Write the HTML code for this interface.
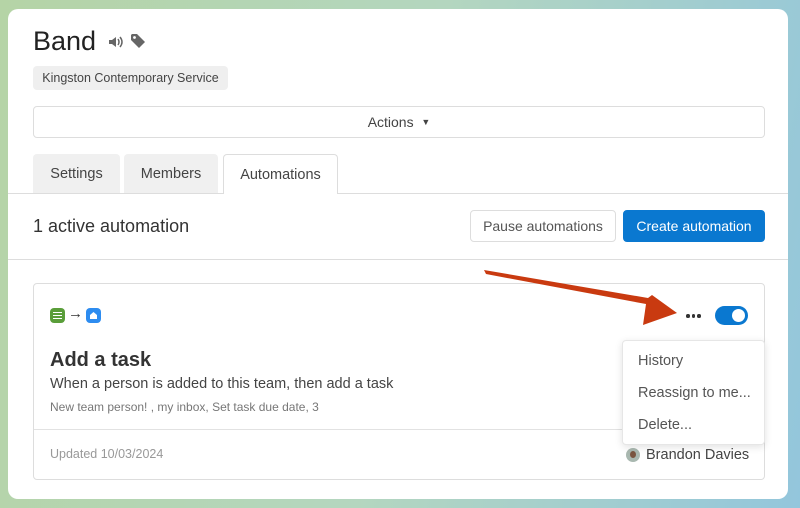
<!DOCTYPE html>
<html><head><style>
*{box-sizing:border-box;margin:0;padding:0}
body{width:800px;height:508px;overflow:hidden;background:linear-gradient(100deg,#b5d4a6 0%,#b4d6bf 50%,#93c6dc 100%);font-family:"Liberation Sans",sans-serif;color:#333;position:relative}
.panel{position:absolute;left:8px;top:9px;width:780px;height:490px;background:#fff;border-radius:10px;overflow:hidden}
.a{position:absolute}
.btn{position:absolute;border:1px solid #ddd;border-radius:4px;font-size:14px;display:flex;align-items:center;justify-content:center}
.dot{position:absolute;top:0;width:3.5px;height:3.5px;border-radius:50%;background:#333}
</style></head><body>
<div class="panel">
<div class="a" style="left:25px;top:17px;font-size:27px;color:#222">Band</div>
<svg class="a" style="left:100px;top:26px" width="16" height="14" viewBox="0 0 16 14"><path d="M1 5h3l4-3v10l-4-3H1z" fill="#666"/><path d="M10 4q2 3 0 6M12 2q4 5 0 10" stroke="#666" stroke-width="1.5" fill="none"/></svg>
<svg class="a" style="left:122px;top:24px" width="16" height="16" viewBox="0 0 16 16"><path d="M1 2v5l8 8 6-6-8-8H2z" fill="#666"/><circle cx="4.5" cy="4.5" r="1.4" fill="#fff"/></svg>
<div class="a" style="left:25px;top:57px;height:24px;width:195px;background:#efefef;border-radius:4px;font-size:12.5px;color:#444;display:flex;align-items:center;justify-content:center">Kingston Contemporary Service</div>
<div class="btn" style="left:25px;top:97px;width:732px;height:32px;color:#444">Actions&nbsp;&nbsp;<span style="font-size:9px">▼</span></div>
<div class="a" style="left:25px;top:145px;width:87px;height:40px;background:#f0f0f0;border-radius:4px 4px 0 0;font-size:14.5px;color:#444;display:flex;align-items:center;justify-content:center">Settings</div>
<div class="a" style="left:116px;top:145px;width:94px;height:40px;background:#f0f0f0;border-radius:4px 4px 0 0;font-size:14.5px;color:#444;display:flex;align-items:center;justify-content:center">Members</div>
<div class="a" style="left:215px;top:145px;width:115px;height:40px;background:#fff;border:1px solid #ddd;border-bottom:none;border-radius:4px 4px 0 0;font-size:14.5px;color:#444;display:flex;align-items:center;justify-content:center;z-index:2">Automations</div>
<div class="a" style="left:0;top:184px;width:780px;border-top:1px solid #ddd"></div>
<div class="a" style="left:25px;top:207px;font-size:18px;color:#333">1 active automation</div>
<div class="btn" style="left:462px;top:201px;width:146px;height:32px;color:#555">Pause automations</div>
<div class="btn" style="left:615px;top:201px;width:142px;height:32px;background:#0a78d0;border-color:#0a78d0;color:#fff">Create automation</div>
<div class="a" style="left:0;top:250px;width:780px;border-top:1px solid #ddd"></div>
<div class="a" style="left:25px;top:274px;width:732px;height:197px;border:1px solid #ddd;border-radius:4px">
<div class="a" style="left:16px;top:24px;width:15px;height:15px;background:#5a9e3a;border-radius:4px"><div style="margin:4px 3px;height:7px;border-top:1.5px solid #fff;border-bottom:1.5px solid #fff;position:relative"><div style="position:absolute;top:1.5px;left:0;right:0;border-top:1.5px solid #fff"></div></div></div>
<div class="a" style="left:34px;top:21px;font-size:15px;color:#333">→</div>
<div class="a" style="left:52px;top:24px;width:15px;height:15px;background:#2d8cf0;border-radius:4px"><svg width="15" height="15"><path d="M4 11V7l3.5-3L11 7v4z" fill="#fff"/></svg></div>
<div class="a" style="left:16px;top:65px;font-size:20px;font-weight:bold;color:#333">Add a task</div>
<div class="a" style="left:16px;top:92px;font-size:14.5px;color:#444">When a person is added to this team, then add a task</div>
<div class="a" style="left:16px;top:116px;font-size:12px;color:#777">New team person! , my inbox, Set task due date, 3</div>
<div class="a" style="left:0;top:145px;width:730px;border-top:1px solid #e2e2e2"></div>
<div class="a" style="left:16px;top:163px;font-size:12.5px;color:#999">Updated 10/03/2024</div>
<div class="a" style="left:592px;top:164px;width:14px;height:14px;border-radius:50%;background:#a9b8b0"><div style="margin:3px 4px;width:6px;height:7px;border-radius:50%;background:#7a5540"></div></div>
<div class="a" style="left:612px;top:163px;font-size:14.5px;color:#444">Brandon Davies</div>
<div class="a" style="left:652px;top:30px;width:16px;height:4px"><div class="dot" style="left:0"></div><div class="dot" style="left:5.5px"></div><div class="dot" style="left:11px"></div></div>
<div class="a" style="left:681px;top:22px;width:33px;height:19px;border-radius:10px;background:#0a78d0"><div style="position:absolute;right:3px;top:3px;width:13px;height:13px;border-radius:50%;background:#fff"></div></div>
</div>
<div class="a" style="left:614px;top:331px;width:143px;height:105px;background:#fff;border:1px solid #e6e6e6;border-radius:4px;box-shadow:0 2px 8px rgba(0,0,0,.12);font-size:14.5px;color:#555">
<div class="a" style="left:15px;top:12px">History</div>
<div class="a" style="left:15px;top:44px">Reassign to me...</div>
<div class="a" style="left:15px;top:76px">Delete...</div>
</div>
</div>
<svg class="a" style="left:0;top:0" width="800" height="508"><path d="M484 270L486 274L646 304L643 325L677 313L652 295L648 298z" fill="#c93a10"/></svg>
</body></html>
